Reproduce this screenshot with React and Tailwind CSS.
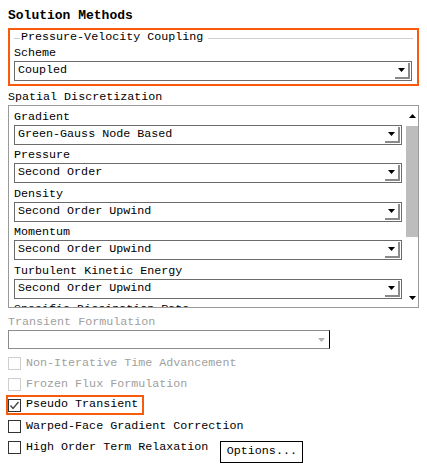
import React from "react";

const font = { fontFamily: '"Liberation Mono", "DejaVu Sans Mono", monospace' };

function Arrow({ disabled }) {
  return (
    <svg width="7" height="4" viewBox="0 0 7 4">
      <polygon points="0,0 7,0 3.5,4" fill={disabled ? "#b0b0b0" : "#000"} />
    </svg>
  );
}

function Select({ value, className = "" }) {
  return (
    <div className={`flex h-[20px] shrink-0 items-stretch border border-[#6b6b6b] bg-white ${className}`}>
      <div className="flex flex-1 items-center pl-[3px] text-[11.7px] leading-none text-black">{value}</div>
      <div className="my-[1px] mr-[1px] flex w-[15px] items-center justify-center border-b-2 border-r-2 border-b-[#8a8a8a] border-r-[#8a8a8a] bg-white">
        <Arrow />
      </div>
    </div>
  );
}

function Label({ text, h }) {
  return (
    <div className={`flex ${h} shrink-0 items-end pb-[1px] text-[11.7px] leading-[14px] text-black`}>{text}</div>
  );
}

function Check({ label, checked, disabled }) {
  return (
    <div className={`flex h-[21px] shrink-0 items-center gap-[5px] ${disabled ? "text-[#a0a0a0]" : "text-black"}`}>
      <div
        className={`flex h-[13px] w-[13px] items-center justify-center border bg-white ${
          disabled ? "border-[#cfcfcf]" : "border-[#333333]"
        }`}
      >
        {checked && (
          <svg width="11" height="11" viewBox="0 0 11 11">
            <polyline points="1.5,5.5 4,8.5 9.5,2" fill="none" stroke="#444" strokeWidth="1.4" />
          </svg>
        )}
      </div>
      <span className="text-[11.7px] leading-none">{label}</span>
    </div>
  );
}

export default function App() {
  return (
    <div className="h-[466px] w-[427px] overflow-hidden bg-white" style={font}>
      <div className="flex flex-col px-[8px] pt-[8px]">
        <div className="h-[20px] text-[13px] font-bold leading-[16px] text-black">Solution Methods</div>
        <div className="flex flex-col border-2 border-[#f95a0c] px-[4px] pb-[3px]">
          <div className="flex h-[16px] items-center">
            <div className="h-px w-[6px] bg-[#d0d0d0]" />
            <span className="px-[1px] text-[11.7px] leading-none text-black">Pressure-Velocity Coupling</span>
            <div className="ml-[4px] h-px flex-1 bg-[#d0d0d0]" />
          </div>
          <Label text="Scheme" h="h-[15px]" />
          <Select value="Coupled" className="mr-[1px]" />
        </div>
        <Label text="Spatial Discretization" h="h-[19px]" />
        <div className="flex h-[203px] shrink-0 border border-[#9a9a9a]">
          <div className="flex flex-1 flex-col overflow-hidden pl-[5px] pr-[4px]">
            <Label text="Gradient" h="h-[19px]" />
            <Select value="Green-Gauss Node Based" />
            <Label text="Pressure" h="h-[18px]" />
            <Select value="Second Order" />
            <Label text="Density" h="h-[19px]" />
            <Select value="Second Order Upwind" />
            <Label text="Momentum" h="h-[18px]" />
            <Select value="Second Order Upwind" />
            <Label text="Turbulent Kinetic Energy" h="h-[19px]" />
            <Select value="Second Order Upwind" />
            <div className="h-[20px] shrink-0 pt-[3px] text-[11.7px] leading-[14px] text-black">Specific Dissipation Rate</div>
          </div>
          <div className="flex w-[12px] flex-col items-center">
            <div className="flex h-[20px] items-center justify-center">
              <svg width="7" height="4" viewBox="0 0 7 4">
                <polygon points="0,4 7,4 3.5,0" fill="#000" />
              </svg>
            </div>
            <div className="h-[111px] w-[12px] bg-[#bdbdbd]" />
            <div className="flex-1" />
            <div className="flex h-[18px] items-center justify-center">
              <Arrow />
            </div>
          </div>
        </div>
        <div className="flex h-[22px] shrink-0 items-end pb-[1px] text-[11.7px] leading-[13px] text-[#a0a0a0]">Transient Formulation</div>
        <div className="flex h-[19px] w-[322px] shrink-0 border border-[#8c8c8c] border-r-black">
          <div className="flex-1" />
          <div className="flex w-[16px] items-center justify-center">
            <Arrow disabled />
          </div>
        </div>
        <div className="h-[4px] shrink-0" />
        <Check label="Non-Iterative Time Advancement" disabled />
        <Check label="Frozen Flux Formulation" disabled />
        <div className="-ml-[2px] flex h-[20px] w-[138px] shrink-0 items-center border-2 border-[#f95a0c]">
          <Check label="Pseudo Transient" checked />
        </div>
        <div className="h-[1px] shrink-0" />
        <Check label="Warped-Face Gradient Correction" />
        <div className="flex h-[21px] shrink-0 items-start overflow-visible">
          <Check label="High Order Term Relaxation" />
          <div className="ml-[12px] mt-[4px] flex h-[22px] w-[83px] shrink-0 items-center justify-center border border-black text-[11.7px] leading-none text-black">
            Options...
          </div>
        </div>
      </div>
    </div>
  );
}
